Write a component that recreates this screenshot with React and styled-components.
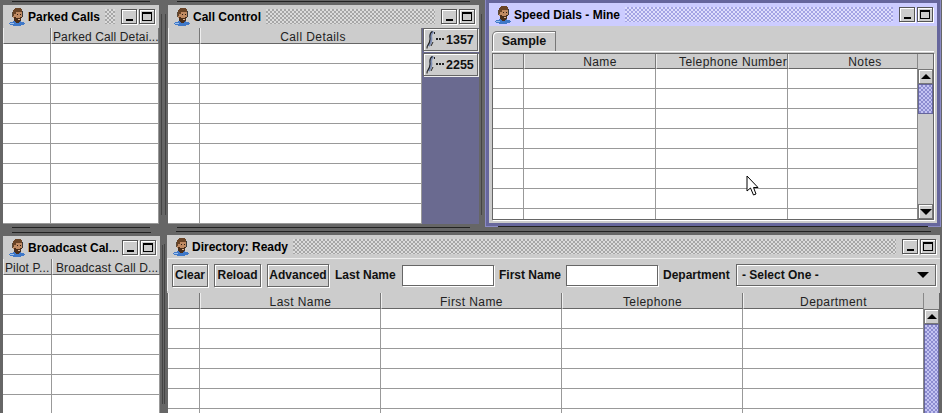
import React from 'react'
import styled, { createGlobalStyle } from 'styled-components'

const GlobalStyle = createGlobalStyle`
  html, body { margin: 0; padding: 0; background: #666; }
  * { box-sizing: border-box; }
`

function Avatar() {
  return (
    <AvatarSvg viewBox="0 0 18 18" shapeRendering="crispEdges">
      <ellipse cx="9" cy="15.5" rx="8" ry="2.4" fill="#3f78c8" />
      <rect x="2" y="15" width="4" height="1" fill="#9cc0ee" />
      <path d="M5 2 L7 0 H12 L14 2 V8 L13 12 L10 15 H8 L6 12 L5 8 Z" fill="#c08a62" />
      <path d="M5 2 L7 0 H12 L14 2 V4 H8 V6 H6 V8 H5 Z" fill="#6a4426" />
      <path d="M6 9 H8 V10 H12 V9 H14 L13 12 L10 15 H8 L6 12 Z" fill="#4a2e1a" />
      <rect x="9" y="6" width="1" height="1" fill="#2a1a10" />
      <rect x="12" y="6" width="1" height="1" fill="#2a1a10" />
      <rect x="10" y="11" width="2" height="1" fill="#d8b090" />
      <rect x="14" y="3" width="1" height="6" fill="#3a3a3a" />
      <rect x="4" y="4" width="1" height="5" fill="#5a4a3a" />
    </AvatarSvg>
  )
}

function PhoneIcon() {
  return (
    <PhoneSvg viewBox="0 0 20 18">
      <path d="M7.5 0.5 C5 1.5 4.5 4 5 7 C5.4 10 4.5 12.5 2.5 15" fill="none" stroke="#7f8fb5" strokeWidth="2.6" />
      <path d="M6.5 0.5 C4.2 1.5 3.6 4 4 7 C4.4 10 3.4 12.5 1.2 15.5 L1 17.5" fill="none" stroke="#222" strokeWidth="1.1" />
      <path d="M8.5 1 V3 M7 11 L5 15" fill="none" stroke="#222" strokeWidth="1" />
      <rect x="10" y="7" width="2" height="2" fill="#222" />
      <rect x="13" y="7" width="2" height="2" fill="#222" />
      <rect x="16" y="7" width="2" height="2" fill="#222" />
    </PhoneSvg>
  )
}

function TitleBar({ title, active, bumps = true }) {
  return (
    <Title $active={active}>
      <Avatar />
      <TitleText>{title}</TitleText>
      {bumps ? <Bumps $active={active} /> : <Spacer />}
      <FrameButton>
        <MinMark />
      </FrameButton>
      <FrameButton>
        <MaxMark />
      </FrameButton>
    </Title>
  )
}

function Table({ cols, labels, pads = [], head = 16, tight, left, scroll, thumbHeight }) {
  const template = cols.join('px ') + 'px'
  return (
    <TableBox>
      <TableMain>
        <HeaderRow $cols={template} $head={head}>
          {labels.map((label, i) => (
            <HeaderCell key={i} $pad={pads[i] || 0} $head={head} $tight={tight} $left={left}>
              {label}
            </HeaderCell>
          ))}
        </HeaderRow>
        {Array.from({ length: 9 }).map((_, r) => (
          <Row key={r} $cols={template}>
            {cols.map((_, c) => (
              <Cell key={c} />
            ))}
          </Row>
        ))}
      </TableMain>
      {scroll && (
        <ScrollBar>
          <ScrollCorner $head={head} />
          <ScrollButton>
            <ArrowUp />
          </ScrollButton>
          <Thumb $height={thumbHeight} />
          <ScrollTrack />
          <ScrollButton>
            <ArrowDown />
          </ScrollButton>
        </ScrollBar>
      )}
    </TableBox>
  )
}

export default function App() {
  return (
    <>
      <GlobalStyle />
      <Desktop>
        <Window $x={3} $y={5} $w={156} $h={219}>
          <Edge $side="top" />
          <Edge $side="bottom" />
          <Edge $side="right" />
          <TitleBar title="Parked Calls" />
          <Table cols={[48, 108]} labels={['', 'Parked Call Detai...']} pads={[0, 1]} tight left />
        </Window>

        <Window $x={168} $y={5} $w={311} $h={219}>
          <Edge $side="top" />
          <Edge $side="bottom" />
          <Edge $side="left" />
          <Edge $side="right" />
          <TitleBar title="Call Control" />
          <CallBody>
            <Table cols={[32, 222]} labels={['', 'Call Details']} pads={[0, 4]} />
            <LinePanel>
              <LineButton>
                <PhoneIcon />
                1357
              </LineButton>
              <LineButton>
                <PhoneIcon />
                2255
              </LineButton>
            </LinePanel>
          </CallBody>
        </Window>

        <Window $x={489} $y={3} $w={448} $h={220} $active>
          <Edge $side="top" />
          <Edge $side="bottom" />
          <TitleBar title="Speed Dials - Mine" active />
          <TabbedBody>
            <TabStrip>
              <Tab>Sample</Tab>
            </TabStrip>
            <TabPage>
              <Table
                cols={[31, 132, 132, 130]}
                labels={['', 'Name', 'Telephone Number', 'Notes']}
                pads={[0, 20, 22, 24]}
                head={15}
                scroll
                thumbHeight={30}
              />
            </TabPage>
          </TabbedBody>
        </Window>

        <Window $x={3} $y={236} $w={157} $h={177}>
          <Edge $side="top" />
          <Edge $side="right" />
          <TitleBar title="Broadcast Cal..." bumps={false} />
          <Table
            cols={[49, 108]}
            labels={['Pilot P...', 'Broadcast Call D...']}
            pads={[1, 3]}
            tight
            left
          />
        </Window>

        <Window $x={167} $y={235} $w={773} $h={178}>
          <Edge $side="top" />
          <Edge $side="left" />
          <TitleBar title="Directory: Ready" />
          <Toolbar>
            <ToolButton $w={36}>Clear</ToolButton>
            <ToolButton $w={47}>Reload</ToolButton>
            <ToolButton $w={62}>Advanced</ToolButton>
            <FieldLabel $w={62}>Last Name</FieldLabel>
            <TextField />
            <FieldLabel $w={62}>First Name</FieldLabel>
            <TextField />
            <FieldLabel $w={68}>Department</FieldLabel>
            <SelectBox>
              - Select One -
              <ArrowDown />
            </SelectBox>
          </Toolbar>
          <DirectoryBody>
            <Table
              cols={[32, 181, 181, 181, 181]}
              labels={['', 'Last Name', 'First Name', 'Telephone', 'Department']}
              pads={[0, 20, 0, 0, 0]}
              scroll
              thumbHeight={200}
            />
          </DirectoryBody>
        </Window>

        <Pointer viewBox="0 0 14 21">
          <path d="M1 1 V16 L4.5 13 L7.5 20 L10 19 L7.5 12.5 H12 Z" fill="#fff" stroke="#000" strokeWidth="1" />
        </Pointer>
      </Desktop>
    </>
  )
}

const Desktop = styled.div`
  position: relative;
  width: 942px;
  height: 413px;
  overflow: hidden;
  background: #666;
  font-family: 'Liberation Sans', Arial, sans-serif;
  font-size: 12px;
  color: #111;
`
const Window = styled.div`
  position: absolute;
  left: ${(p) => p.$x}px;
  top: ${(p) => p.$y}px;
  width: ${(p) => p.$w}px;
  height: ${(p) => p.$h}px;
  display: flex;
  flex-direction: column;
  background: #ccc;
  box-shadow: ${(p) => (p.$active ? '0 0 0 3px #66669c, 0 0 0 4px #8a8ac4' : 'none')};
`
const Edge = styled.span`
  position: absolute;
  background: ${(p) => (p.$side === 'left' || p.$side === 'right' ? '#444' : '#222')};
  ${(p) => p.$side === 'top' && 'top: -4px; left: 9px; right: 9px; height: 1px;'}
  ${(p) => p.$side === 'bottom' && 'bottom: -4px; left: 9px; right: 9px; height: 1px;'}
  ${(p) => p.$side === 'left' && 'left: -3px; top: 9px; bottom: 9px; width: 1px;'}
  ${(p) => p.$side === 'right' && 'right: -3px; top: 9px; bottom: 9px; width: 1px;'}
`
const Title = styled.div`
  flex: none;
  height: 23px;
  display: flex;
  align-items: center;
  padding: 0 4px 0 5px;
  background: ${(p) => (p.$active ? '#ccccff' : '#ccc')};
`
const AvatarSvg = styled.svg`
  flex: none;
  width: 18px;
  height: 18px;
  margin-right: 2px;
`
const TitleText = styled.span`
  flex: none;
  font-weight: 700;
  font-size: 12px;
  white-space: nowrap;
  color: #000;
`
const Bumps = styled.span`
  flex: 1;
  height: 15px;
  margin: 0 4px 0 5px;
  background: repeating-conic-gradient(
      ${(p) => (p.$active ? '#a4a4e4' : '#a6a6a6')} 0 25%,
      ${(p) => (p.$active ? '#dedefc' : '#dcdcdc')} 0 50%
    )
    0 0 / 4px 4px;
`
const Spacer = styled.span`
  flex: 1;
`
const FrameButton = styled.span`
  flex: none;
  width: 16px;
  height: 15px;
  margin-left: 2px;
  display: flex;
  align-items: center;
  justify-content: center;
  position: relative;
  background: #ccc;
  border: 1px solid #555;
  box-shadow: inset 1px 1px 0 #fff, 1px 1px 0 #fff;
`
const MinMark = styled.i`
  display: block;
  width: 7px;
  height: 2px;
  background: #000;
  margin-top: 7px;
`
const MaxMark = styled.i`
  display: block;
  width: 10px;
  height: 9px;
  border: 1px solid #000;
  border-top-width: 2px;
`
const TableBox = styled.div`
  flex: 1;
  min-height: 0;
  min-width: 0;
  display: flex;
  overflow: hidden;
`
const TableMain = styled.div`
  flex: 1;
  min-width: 0;
  background: #fff;
  overflow: hidden;
`
const HeaderRow = styled.div`
  display: grid;
  grid-template-columns: ${(p) => p.$cols};
  height: ${(p) => p.$head}px;
`
const HeaderCell = styled.div`
  background: #ccc;
  border-left: 1px solid #eee;
  border-right: 1px solid #777;
  border-bottom: 1px solid #666;
  padding-left: ${(p) => p.$pad}px;
  text-align: ${(p) => (p.$left ? 'left' : 'center')};
  line-height: ${(p) => p.$head + 2}px;
  letter-spacing: ${(p) => (p.$tight ? '0.12px' : '0.42px')};
  color: #222;
  white-space: nowrap;
  overflow: hidden;
`
const Row = styled.div`
  display: grid;
  grid-template-columns: ${(p) => p.$cols};
  height: 20px;
  border-bottom: 1px solid #999;
`
const Cell = styled.div`
  border-right: 1px solid #999;
`
const ScrollBar = styled.div`
  flex: none;
  width: 16px;
  display: flex;
  flex-direction: column;
  background: #ccc;
  border-left: 1px solid #888;
`
const ScrollCorner = styled.div`
  flex: none;
  height: ${(p) => p.$head}px;
`
const ScrollButton = styled.div`
  flex: none;
  height: 15px;
  display: flex;
  align-items: center;
  justify-content: center;
  background: #ccc;
  border: 1px solid #777;
  box-shadow: inset 1px 1px 0 #fff;
`
const ArrowUp = styled.i`
  display: block;
  border-left: 5px solid transparent;
  border-right: 5px solid transparent;
  border-bottom: 5px solid #000;
`
const ArrowDown = styled.i`
  display: block;
  border-left: 6px solid transparent;
  border-right: 6px solid transparent;
  border-top: 6px solid #000;
`
const Thumb = styled.div`
  flex: none;
  height: ${(p) => p.$height}px;
  border: 1px solid #66669c;
  background: repeating-conic-gradient(#8c8cd0 0 25%, #c4c4f2 0 50%) 0 0 / 4px 4px;
`
const ScrollTrack = styled.div`
  flex: 1;
  min-height: 0;
  background: #ccc;
`
const CallBody = styled.div`
  flex: 1;
  min-height: 0;
  display: flex;
`
const LinePanel = styled.div`
  flex: none;
  width: 57px;
  display: flex;
  flex-direction: column;
  gap: 2px;
  padding: 0 1px;
  background: #6a6a90;
`
const LineButton = styled.div`
  height: 23px;
  display: flex;
  align-items: center;
  padding: 1px 0 0 2px;
  font-weight: 700;
  font-size: 12.5px;
  background: #ccc;
  border: 1px solid #666;
  box-shadow: inset 1px 1px 0 #fff, 1px 1px 0 #eee;
`
const PhoneSvg = styled.svg`
  flex: none;
  width: 20px;
  height: 18px;
`
const TabbedBody = styled.div`
  flex: 1;
  min-height: 0;
  display: flex;
  flex-direction: column;
  padding: 5px 3px 3px 3px;
`
const TabStrip = styled.div`
  flex: none;
  display: flex;
  height: 21px;
  border-bottom: 1px solid #fff;
`
const Tab = styled.div`
  width: 64px;
  height: 20px;
  text-align: center;
  line-height: 19px;
  font-weight: 700;
  font-size: 12.5px;
  background: #ccc;
  border: 1px solid #777;
  border-bottom: none;
  border-top-left-radius: 5px;
  box-shadow: inset 1px 1px 0 #fff;
`
const TabPage = styled.div`
  flex: 1;
  min-height: 0;
  display: flex;
  margin-top: 1px;
  border: 1px solid #666;
  box-shadow: 1px 1px 0 #fff;
`
const Toolbar = styled.div`
  flex: none;
  height: 33px;
  display: flex;
  align-items: center;
  gap: 5px;
  padding: 0 4px;
  background: #ccc;
  border-top: 1px solid #eee;
  border-left: 1px solid #eee;
`
const ToolButton = styled.div`
  flex: none;
  width: ${(p) => p.$w}px;
  height: 23px;
  margin-right: 1px;
  text-align: center;
  line-height: 21px;
  font-weight: 700;
  background: #ccc;
  border: 1px solid #666;
  box-shadow: inset 1px 1px 0 #fff, 1px 1px 0 #fff;
`
const FieldLabel = styled.span`
  flex: none;
  width: ${(p) => p.$w}px;
  font-weight: 700;
  white-space: nowrap;
`
const TextField = styled.input`
  flex: none;
  width: 92px;
  height: 21px;
  background: #fff;
  border: 1px solid #666;
  box-shadow: 1px 1px 0 #fff;
  outline: none;
`
const SelectBox = styled.div`
  flex: none;
  width: 200px;
  height: 22px;
  display: flex;
  align-items: center;
  justify-content: space-between;
  padding: 0 6px 0 5px;
  font-weight: 700;
  background: #ccc;
  border: 1px solid #666;
  box-shadow: inset 1px 1px 0 #fff, 1px 1px 0 #fff;
`
const DirectoryBody = styled.div`
  flex: 1;
  min-height: 0;
  display: flex;
  margin-top: 2px;
  padding-left: 1px;
  padding-right: 1px;
  background: #666;
`
const Pointer = styled.svg`
  position: absolute;
  left: 746px;
  top: 175px;
  width: 14px;
  height: 21px;
`
